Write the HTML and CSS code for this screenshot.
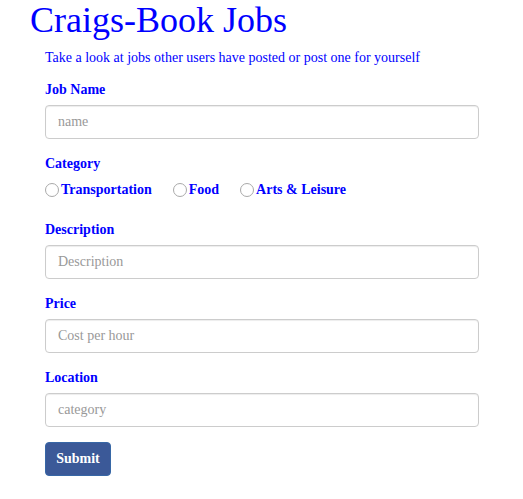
FILE: index.html
```html
<!DOCTYPE html>
<html>
<head>
<meta charset="utf-8">
<title>Craigs-Book Jobs</title>
<link rel="stylesheet" href="styles.css">
</head>
<body>
<h1 class="title">Craigs-Book Jobs</h1>
<div class="content">
  <p class="lead">Take a look at jobs other users have posted or post one for yourself</p>
  <form class="job-form">
    <div class="group">
      <label class="label" for="name">Job Name</label>
      <input class="field" id="name" type="text" placeholder="name">
    </div>
    <div class="group">
      <label class="label">Category</label>
      <div class="radios">
        <label class="radio"><input type="radio" name="cat" class="dot"><span>Transportation</span></label>
        <label class="radio"><input type="radio" name="cat" class="dot"><span>Food</span></label>
        <label class="radio"><input type="radio" name="cat" class="dot"><span>Arts &amp; Leisure</span></label>
      </div>
    </div>
    <div class="group">
      <label class="label" for="desc">Description</label>
      <input class="field" id="desc" type="text" placeholder="Description">
    </div>
    <div class="group">
      <label class="label" for="price">Price</label>
      <input class="field" id="price" type="text" placeholder="Cost per hour">
    </div>
    <div class="group">
      <label class="label" for="loc">Location</label>
      <input class="field" id="loc" type="text" placeholder="category">
    </div>
    <button class="submit" type="button">Submit</button>
  </form>
</div>
</body>
</html>
```

FILE: styles.css
```css
* { box-sizing: border-box; }
body {
  margin: 0;
  background: #fff;
  color: #0000ff;
  font-family: "Liberation Serif", "Times New Roman", serif;
  font-size: 14px;
  line-height: 20px;
}
.title {
  margin: 0;
  padding-left: 30px;
  font-size: 36px;
  line-height: 40px;
  font-weight: normal;
}
.content {
  margin-left: 45px;
  width: 434px;
}
.lead {
  margin: 8px 0 12px;
}
.group {
  margin-bottom: 15px;
}
.label {
  display: block;
  font-weight: bold;
  margin-bottom: 5px;
}
.field {
  display: block;
  width: 100%;
  height: 34px;
  padding: 6px 12px;
  border: 1px solid #ccc;
  border-radius: 4px;
  box-shadow: inset 0 1px 1px rgba(0,0,0,.075);
  font-family: "Liberation Serif", "Times New Roman", serif;
  font-size: 14px;
  color: #555;
  background: #fff;
}
.field::placeholder { color: #999; }
.radios {
  display: flex;
  align-items: center;
  gap: 21px;
  height: 26px;
  padding-bottom: 4px;
}
.radio {
  display: flex;
  align-items: center;
  gap: 2px;
  font-weight: bold;
}
.dot {
  appearance: none;
  -webkit-appearance: none;
  margin: 0;
  width: 14px;
  height: 14px;
  border: 1px solid #a9a9a9;
  border-radius: 50%;
  background: #fff;
}
.submit {
  display: block;
  width: 66px;
  height: 34px;
  padding: 0;
  margin-top: 15px;
  border: 1px solid #3767a6;
  border-radius: 4px;
  background: #3b5998;
  color: #fff;
  font-family: "Liberation Serif", "Times New Roman", serif;
  font-size: 14px;
  font-weight: bold;
}
.job-form .group:last-of-type { margin-bottom: 0; }
```
